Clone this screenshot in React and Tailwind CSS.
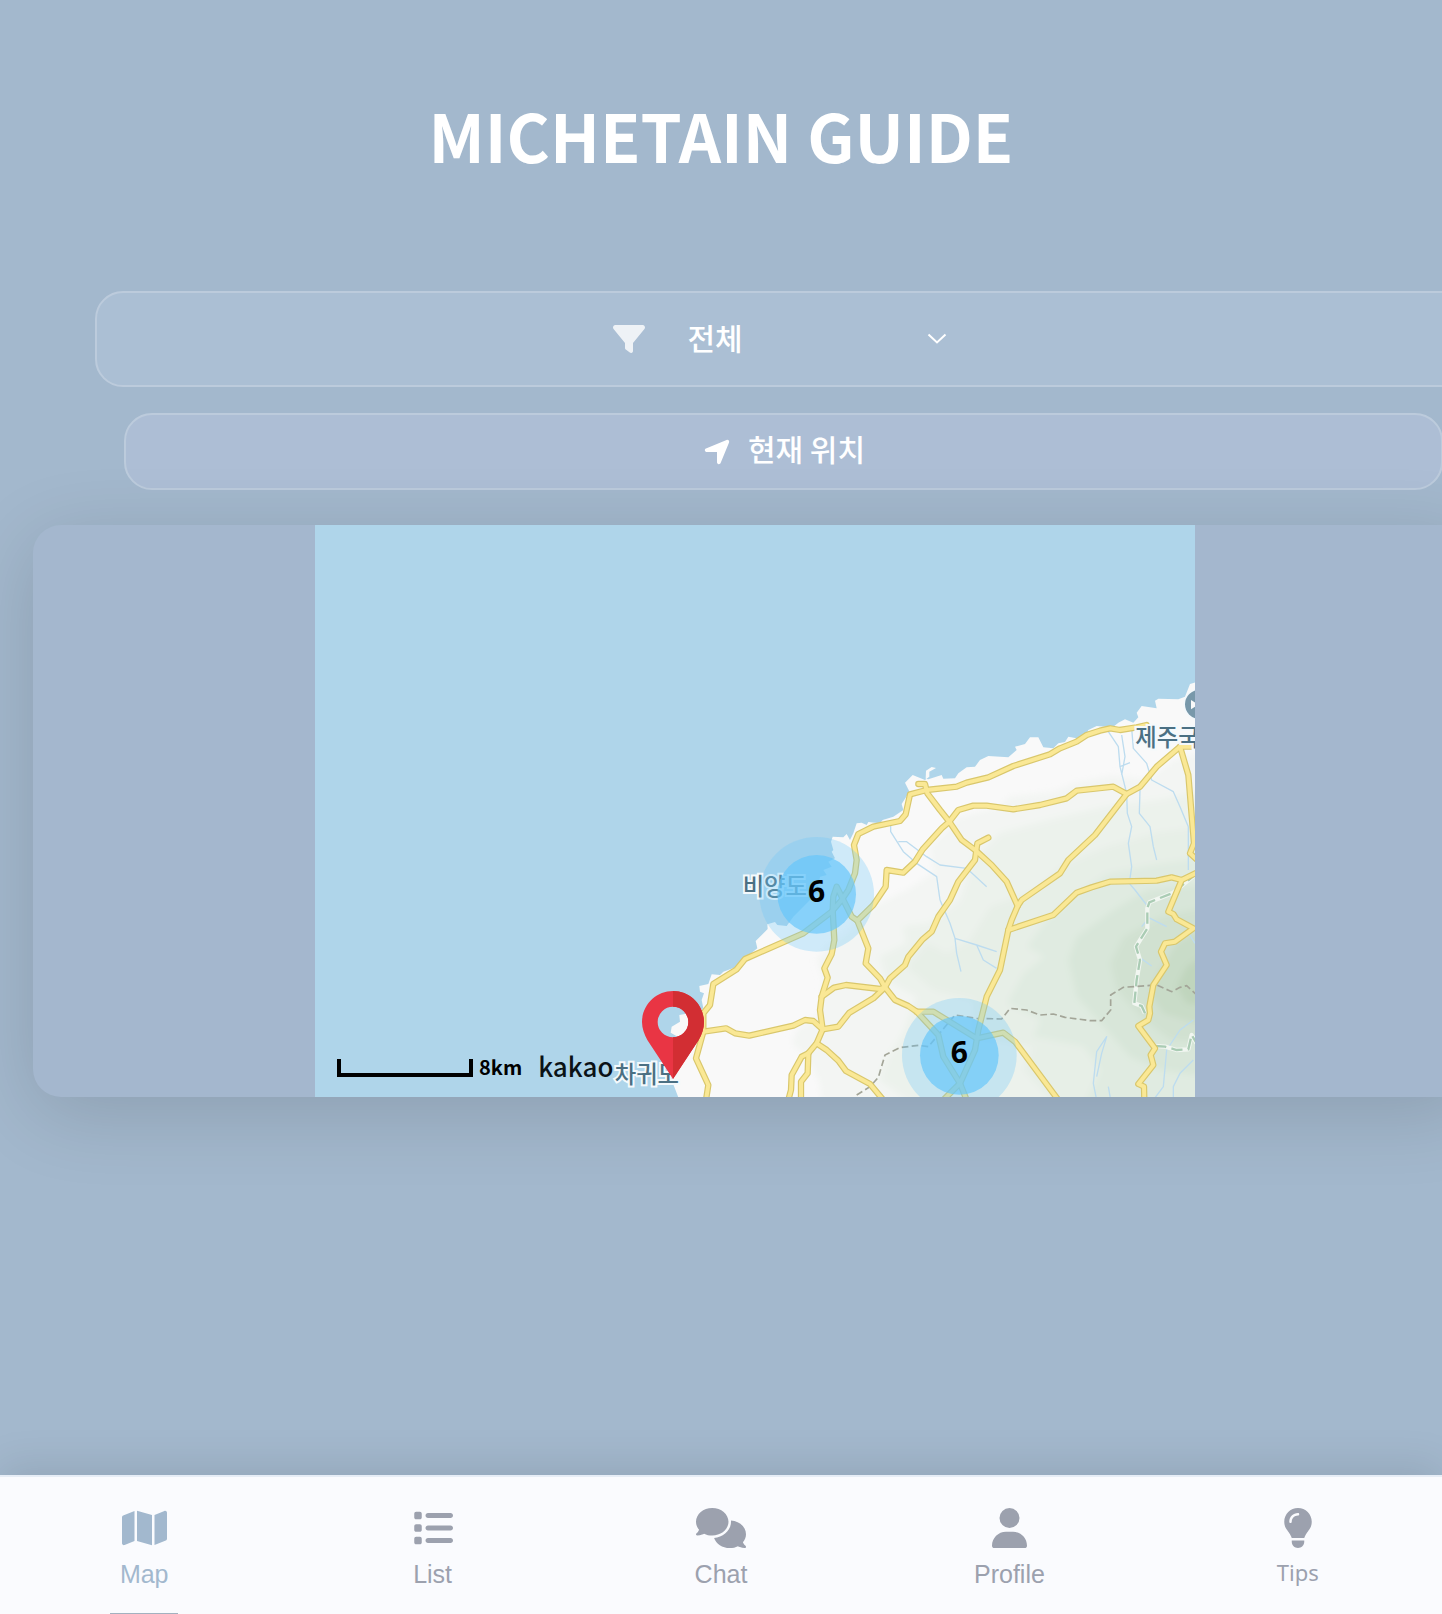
import React from "react";
import { FaMap, FaComments, FaUser, FaLightbulb, FaFilter, FaLocationArrow, FaList } from "react-icons/fa6";

const ROADS = [
  "M1520 195L1490 202L1440 210L1410 205L1380 212L1340 225L1310 245L1260 265L1230 283L1120 318L1045 352L980 368L950 380L860 390L810 403L797 463L780 483L700 500L655 522L642 555L650 600L645 640L625 690L605 720L575 755L490 820L315 897L290 928L220 972L210 1035L190 1060L190 1115L168 1195L205 1275L198 1320",
  "M835 372H855L862 400L900 450L928 485L965 540L1008 572L1055 615L1100 665L1133 738",
  "M1460 402L1420 380L1310 392L1280 415L1200 435L1120 448L1040 437H1000L955 450L928 485L905 505L848 568L825 605L790 638L740 630L737 680L700 735L652 782L685 865L677 910L720 955L735 982L765 1020L805 1038L830 1055L895 1125L910 1190L960 1270L980 1320",
  "M1045 533L1012 550L1005 600L955 665L930 720L895 770L875 815L848 838L805 890L795 915L750 955L735 982L700 1015L628 1058L595 1100L548 1108",
  "M1665 260H1620L1550 320L1500 380L1460 402L1365 525L1285 600L1260 640L1145 720L1133 738L1115 780L1105 810L1080 930L1040 1010L1015 1110L1005 1170L960 1270L910 1320",
  "M1620 260L1645 345L1662 550L1650 580L1670 598",
  "M1105 810L1240 765L1310 698L1355 682L1410 665L1550 662L1595 652L1625 660L1670 638",
  "M1625 660L1585 755L1600 762L1610 778L1660 805L1605 845L1575 850L1563 875L1580 915L1540 975L1528 1040L1530 1060L1525 1080L1495 1098L1545 1165L1532 1185L1540 1215L1495 1272L1512 1280L1513 1320",
  "M830 1055H880L1010 1135L1090 1118L1125 1145L1255 1320",
  "M190 1115L258 1105L285 1120L328 1127L460 1097L495 1080L520 1083L548 1108L530 1150L505 1180L503 1240L483 1265V1320",
  "M505 1180L485 1190L455 1245L453 1290L445 1320",
  "M530 1150L560 1170L595 1202L618 1233L690 1272L730 1320",
  "M548 1108L540 1050L545 1010L563 953L553 925L575 882L583 840L578 750L580 710L590 680L635 770L652 782",
  "M545 1010L582 983L618 975L720 987L735 982",
];

const LAND =
  "M1670 66L1650 72L1635 110L1615 118L1555 116L1545 122L1550 145L1505 138L1490 158L1495 172L1480 188L1455 178L1435 188L1420 200L1395 200L1370 198L1345 210L1340 222L1310 235L1285 230L1275 246L1255 250L1240 265L1210 262L1195 232H1170L1155 252L1125 260L1130 270L1105 292L1045 288L1020 300L1005 320L980 322L955 340L945 355L910 356L905 345L865 358L857 356L858 332L875 321L888 324L868 335V350L855 360L818 345L795 368L810 398L802 405L785 432L790 450L760 470L728 480L720 490L685 486L680 495L665 488L650 490L640 520L630 540L620 522L610 532L578 530L573 545L580 570L575 575L585 595L565 605L575 620L550 630L560 645L540 650L530 700L460 770L440 798L412 795L405 786L382 793L383 807L347 843L352 865L315 895L290 920L250 935L240 945L215 943L205 972L178 978L180 995L192 1000L185 1020L190 1045L175 1055L150 1045L135 1062L118 1065L120 1085L95 1100L92 1118L130 1140L140 1180L120 1220L95 1260L118 1320H1670Z";

const RIVERS =
  "M1405 215L1435 260L1440 320L1460 400L1462 460L1475 500L1465 550L1475 620L1468 670L1485 690L1520 735L1522 780L1505 800M1475 205L1480 265L1520 310L1535 360L1600 395L1620 440L1645 500V630M1445 225L1455 290L1445 345M1440 320L1470 308M1500 390L1498 460L1530 500L1540 560L1550 600M752 495V515L790 575L830 610L890 650L900 720M775 545L800 545L860 590L900 615L980 625L1040 680M900 720L930 790L945 835L1010 855L1070 875M1010 855L1030 900L1070 925M945 835L950 880L963 935M1370 1250L1385 1180L1400 1130L1370 1175L1360 1270L1370 1320M1405 1280L1412 1320M1660 1080L1620 1110L1580 1170L1570 1280L1540 1320M1660 1200L1620 1240L1600 1280V1320M1640 810L1665 850M1520 770L1580 800M1495 890L1535 918";

const PINE = "M1670 640L1600 698L1528 727L1522 745V805L1488 860L1500 900L1490 960L1483 1030L1505 1038L1515 1060M1545 1158L1575 1160L1610 1170L1645 1168L1655 1125L1670 1150";
const BORDER = "M650 1305L690 1280L715 1252L735 1185L780 1163L835 1156L865 1160L945 1065L1010 1075L1085 1077L1110 1045L1160 1050L1200 1065L1240 1062L1275 1072L1350 1082H1385L1412 1050V1005L1450 982L1550 975L1595 995L1620 982L1640 977L1670 1005";

const MAP_LABEL = "fill-[#4b7083] stroke-[#f4f9fc] stroke-[12px] text-[70px] font-medium [paint-order:stroke]";

function Cluster({ x, y, count }) {
  return (
    <g>
      <circle cx={x} cy={y} r="172" fill="rgba(110,200,250,0.3)" />
      <circle cx={x} cy={y} r="118" fill="rgba(100,198,250,0.68)" />
      <text x={x} y={y + 22} textAnchor="middle" className="fill-black text-[90px] font-bold">
        {count}
      </text>
    </g>
  );
}

function JejuMap() {
  return (
    <svg viewBox="-975 -405 2640 1716" className="block h-full w-full" role="img" aria-label="제주 지도">
      <defs>
        <clipPath id="land"><path d={LAND} /></clipPath>
        <filter id="soft"><feGaussianBlur stdDeviation="9" /></filter>
      </defs>
      <rect x="-975" y="-405" width="2640" height="1716" fill="#afd5ea" />
      <path d={LAND} fill="#f9f9f9" />
      <g clipPath="url(#land)">
        <g filter="url(#soft)">
          <path fill="#f3f5f3" d="M1700 270L1600 300L1520 360L1420 345L1300 370L1240 395L1110 410L1080 440L960 470L870 560L880 640L800 690L700 740L640 800L560 860L530 900L550 960L540 1060L470 1110L455 1150L500 1190L540 1270L545 1340H1700Z" />
          <path fill="#ecf2ec" d="M1700 390L1560 420L1400 440L1230 480L1080 520L1000 600L960 720L870 790L790 800L800 850L720 890L740 960L830 1010L790 1120L740 1200L720 1260L830 1340H1700Z" />
          <path fill="#e7efe7" d="M1700 500L1560 515L1400 560L1260 620L1190 690L1050 740L990 840L920 880L860 850L800 920L880 990L1000 1020L1010 1130L1180 1160L1150 1230L1250 1340H1700Z" />
          <path fill="#e0ebe1" d="M1700 590L1560 610L1400 640L1300 710L1210 790L1160 860L1210 890L1150 940L1100 1030L1200 1080L1180 1130L1330 1160L1380 1230L1330 1340H1700Z" />
          <path fill="#d8e6d9" d="M1700 670L1520 690L1420 750L1310 830L1285 900L1310 1010L1400 1110L1470 1190L1560 1230L1700 1250Z" />
          <path fill="#d1e1d1" d="M1700 740L1560 770L1450 830L1410 910L1430 990L1500 1070L1590 1140L1700 1150Z" />
          <path fill="#c9dcc8" d="M1700 800L1610 850L1560 930L1530 1000L1570 1060L1700 1100Z" />
          <path fill="#c0d5bd" d="M1700 880L1640 920L1610 980L1640 1030L1700 1040Z" />
        </g>
        <path d={RIVERS} fill="none" stroke="#bddcef" strokeWidth="4" strokeLinejoin="round" />
      </g>
      <path d={PINE} fill="none" stroke="#f1f6f1" strokeWidth="13" strokeLinejoin="round" />
      <path d={PINE} fill="none" stroke="#aaccb4" strokeWidth="7" strokeDasharray="34 16" />
      <path d={BORDER} fill="none" stroke="#a3a598" strokeWidth="5" strokeDasharray="20 10" />
      <g fill="none" strokeLinejoin="round" strokeLinecap="round">
        <g stroke="#d9c76c" strokeWidth="19">{ROADS.map((d) => <path key={d} d={d} />)}</g>
        <g stroke="#fae895" strokeWidth="12">{ROADS.map((d) => <path key={d} d={d} />)}</g>
      </g>
      <circle cx="1679" cy="133" r="49" fill="#f4f9fc" />
      <circle cx="1679" cy="133" r="44" fill="#7898aa" />
      <path d="M1653 120L1675 134L1653 148Z" fill="#f9f9f9" />
      <text x="308" y="705" className={MAP_LABEL}>비양도</text>
      <text x="1486" y="258" className={MAP_LABEL}>제주국제공항</text>
      <text x="-76" y="1268" className={MAP_LABEL}>차귀도</text>
      <Cluster x={530} y={703} count={6} />
      <Cluster x={958} y={1186} count={6} />
      <path fillRule="evenodd" fill="#e93544" d="M99 993C48 993 6 1035 6 1086C6 1106 13 1123 22 1140L99 1257L176 1140C186 1123 192 1106 192 1086C192 1035 150 993 99 993ZM99 1040A46 46 0 1 1 99 1132A46 46 0 1 1 99 1040Z" />
      <path fill="#d22e33" d="M99 993V1040A46 46 0 0 1 99 1132V1257L176 1140C186 1123 192 1106 192 1086C192 1035 150 993 99 993Z" />
    </svg>
  );
}

const TABS = [
  { label: "Map", Icon: FaMap, size: "h-10 w-[45px]", active: true },
  { label: "List", Icon: FaList, size: "h-10 w-10" },
  { label: "Chat", Icon: FaComments, size: "h-10 w-[50px]" },
  { label: "Profile", Icon: FaUser, size: "h-10 w-[35px]" },
  { label: "Tips", Icon: FaLightbulb, size: "h-10 w-[30px]", alt: true },
];

export default function App() {
  return (
    <div className="flex min-h-screen w-full flex-col overflow-hidden bg-[#a3b8cd] font-['Noto_Sans','Noto_Sans_CJK_KR',sans-serif]">
      <header className="pt-[86px] text-center">
        <h1 className="font-['Noto_Sans_CJK_KR',sans-serif] text-[66px] leading-[96px] font-bold text-white">
          MICHETAIN GUIDE
        </h1>
      </header>

      <main className="flex flex-col pt-[109px]">
        <div className="mr-[-30px] ml-[95px] flex h-24 items-center justify-center gap-4 rounded-[28px] border-2 border-[#bccbdc] bg-[#abbfd4]">
          <FaFilter className="size-8 text-[#eef2f6]" aria-hidden="true" />
          <div className="relative">
            <select
              aria-label="카테고리"
              className="block h-16 w-[294px] appearance-none bg-transparent px-[27px] pb-1 font-['Noto_Sans_CJK_KR',sans-serif] text-[30px] font-medium text-white outline-none"
            >
              <option>전체</option>
            </select>
            <svg viewBox="0 0 20 12" className="pointer-events-none absolute top-[26px] right-2 h-3 w-5" fill="none" stroke="white" strokeWidth="2" aria-hidden="true">
              <path d="M1.500 1.500L10 9.500L18.500 1.500" />
            </svg>
          </div>
        </div>

        <button
          type="button"
          className="mt-[26px] mr-[-1px] ml-[124px] flex h-[77px] items-center justify-center gap-4 rounded-[28px] border-2 border-[#bccbdc] bg-[#adbed5] pb-2 font-['Noto_Sans_CJK_KR',sans-serif] text-[30px] leading-10 font-medium text-white"
        >
          <FaLocationArrow className="mt-2 size-[30px]" aria-hidden="true" />
          현재 위치
        </button>

        <section className="mt-[35px] mr-[-35px] ml-[33px] flex h-[572px] justify-center rounded-[28px] bg-[#a4b7ce] shadow-[0_16px_80px_rgba(0,0,0,0.14)]">
          <div className="relative h-full w-[880px] overflow-hidden">
            <JejuMap />
            <div className="absolute bottom-[13px] left-[22px] flex items-end font-['Noto_Sans_CJK_KR',sans-serif] text-black">
              <div className="mb-[7px] h-[18px] w-[136px] border-4 border-t-0 border-black" />
              <span className="ml-[6px] text-[20px] leading-[34px] font-bold">8km</span>
              <span className="ml-4 text-[26px] leading-[36px] font-medium text-[#0b1216]">kakao</span>
            </div>
          </div>
        </section>
      </main>

      <nav className="mt-auto flex h-[139px] border-t-2 border-[#e6edf6] bg-[#fafbfe] shadow-[0_-8px_40px_rgba(0,0,0,0.1)]">
        {TABS.map(({ label, Icon, size, active, alt }) => (
          <a
            key={label}
            href={"#" + label.toLowerCase()}
            className={
              "flex flex-1 flex-col items-center justify-between pt-[31px] " +
              (active ? "text-[#a2b8ce]" : "text-[#9ca1ae]")
            }
          >
            <span className="flex flex-col items-center gap-3">
              <Icon className={size} aria-hidden="true" />
              <span className={alt ? "text-[22px] leading-6" : "font-['Liberation_Sans',sans-serif] text-[25px] leading-7"}>
                {label}
              </span>
            </span>
            {active && <span className="h-px w-[68px] bg-[#a2b1bf]" />}
          </a>
        ))}
      </nav>
    </div>
  );
}
